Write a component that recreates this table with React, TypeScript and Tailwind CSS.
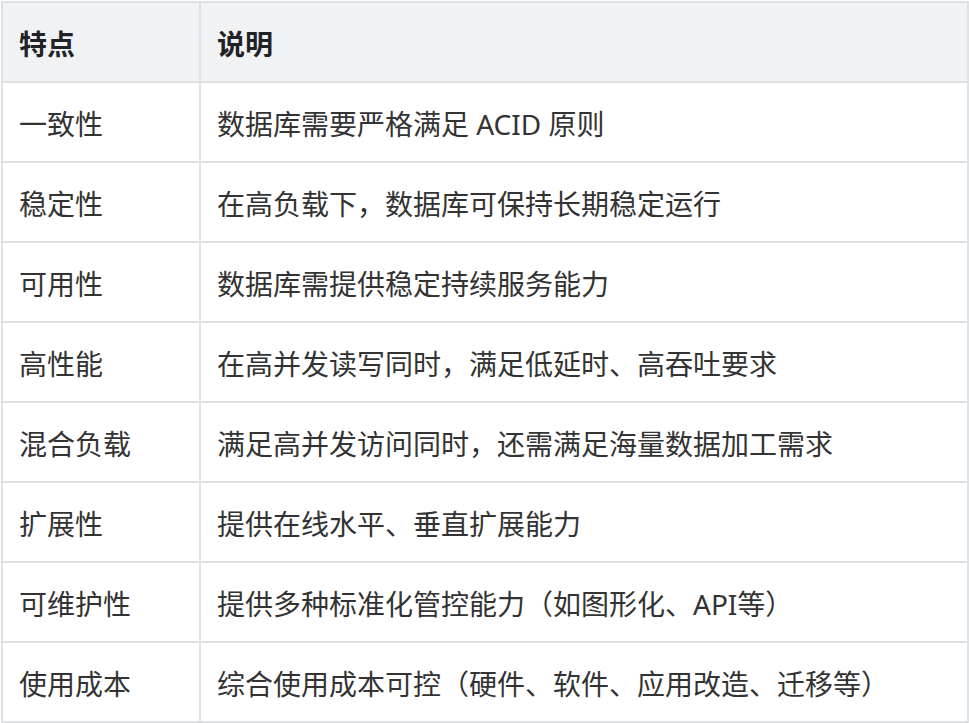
const rows: [string, string][] = [
  ["一致性", "数据库需要严格满足 ACID 原则"],
  ["稳定性", "在高负载下，数据库可保持长期稳定运行"],
  ["可用性", "数据库需提供稳定持续服务能力"],
  ["高性能", "在高并发读写同时，满足低延时、高吞吐要求"],
  ["混合负载", "满足高并发访问同时，还需满足海量数据加工需求"],
  ["扩展性", "提供在线水平、垂直扩展能力"],
  ["可维护性", "提供多种标准化管控能力（如图形化、API等）"],
  ["使用成本", "综合使用成本可控（硬件、软件、应用改造、迁移等）"],
];

export default function App() {
  return (
    <div
      className="bg-white min-h-screen pt-px pl-px"
      style={{ fontFamily: '"Noto Sans", "Noto Sans CJK SC", sans-serif' }}
    >
      <div className="w-[968px] border-2 border-[#dfe2e5] text-[28px] leading-none">
        {/* header */}
        <div className="flex h-[78px] bg-[#f1f2f4] font-bold text-[#1f2328]">
          <div className="w-[198px] border-r-2 border-[#dfe2e5] flex items-center px-4 pt-1">
            特点
          </div>
          <div className="flex-1 flex items-center px-4 pt-1">说明</div>
        </div>
        {rows.map(([name, desc]) => (
          <div key={name} className="flex h-[80px] border-t-2 border-[#dfe2e5] text-[#333333]">
            <div className="w-[198px] border-r-2 border-[#dfe2e5] flex items-center px-4 pt-1">
              {name}
            </div>
            <div className="flex-1 flex items-center px-4 pt-1">{desc}</div>
          </div>
        ))}
      </div>
    </div>
  );
}
